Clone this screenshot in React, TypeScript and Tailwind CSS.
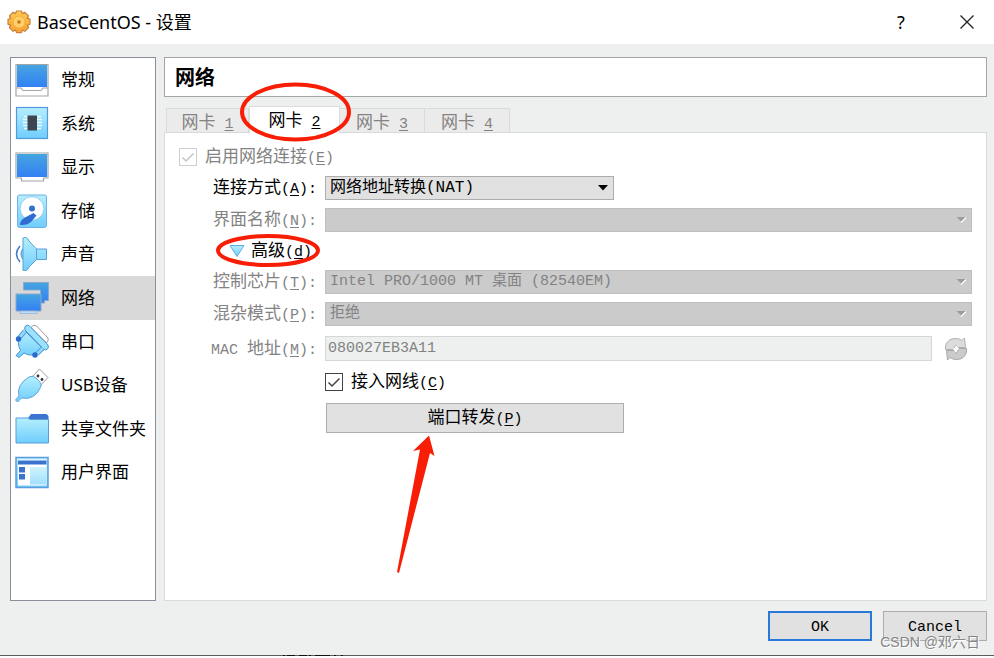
import type { ReactNode } from "react";

const mono = "font-['Liberation_Mono','Noto_Sans_CJK_SC',monospace]";
const cjk = "font-['Noto_Sans_CJK_SC',sans-serif]";

function Key({ children }: { children: ReactNode }) {
  return <span className={`${mono} text-[15px]`}>{children}</span>;
}

function Mnemonic({ text, letter }: { text: string; letter: string }) {
  return (
    <>
      {text}
      <Key>
        (<u className="underline-offset-2">{letter}</u>)
      </Key>
    </>
  );
}

function Gradients() {
  return (
    <svg className="absolute size-0" aria-hidden="true">
      <defs>
        <linearGradient id="screen" x1="0" y1="0" x2="0" y2="1">
          <stop offset="0" stopColor="#45a5e0" />
          <stop offset="1" stopColor="#3380f4" />
        </linearGradient>
        <linearGradient id="sky" x1="0" y1="0" x2="0" y2="1">
          <stop offset="0" stopColor="#b5effd" />
          <stop offset="1" stopColor="#6fcdfc" />
        </linearGradient>
        <linearGradient id="gear" x1="0" y1="0" x2="0" y2="1">
          <stop offset="0" stopColor="#ffcb50" />
          <stop offset="1" stopColor="#f7a233" />
        </linearGradient>
      </defs>
    </svg>
  );
}

const icons: Record<string, ReactNode> = {
  general: (
    <>
      <path d="M1 1.500h32v31.500h-32z" fill="#fff" stroke="#a3a6a9" strokeWidth="1.200" />
      <path d="M2 2h30v22h-30z" fill="url(#screen)" />
      <path d="M1 25h5l2 2.500h18l2-2.500h5" fill="none" stroke="#a3a6a9" strokeWidth="1.200" />
    </>
  ),
  system: (
    <>
      <rect x="1.500" y="1.500" width="31" height="31" fill="url(#sky)" stroke="#5599dc" strokeWidth="1.200" />
      <path d="M9 10.500h17M8 13.500h19M8 16.500h19M8 19.500h19M9 22.500h17" stroke="#eefaff" strokeWidth="1.400" />
      <rect x="12.500" y="9.500" width="9.500" height="15" fill="#3d4650" />
    </>
  ),
  display: (
    <>
      <path d="M1 3h32v25h-4.500v3h-22v-3H1z" fill="#fff" stroke="#a0a4a8" strokeWidth="1.200" />
      <path d="M2 4h30v23H2z" fill="url(#screen)" />
    </>
  ),
  storage: (
    <>
      <rect x="2.500" y="1" width="29" height="32.500" rx="2" fill="url(#sky)" stroke="#6fb0e6" />
      <circle cx="17" cy="14.500" r="11.800" fill="#fff" stroke="#8fc3ee" strokeWidth=".8" />
      <path d="M5 31q0-5 5-7.500l8.500-4.500 3 2.500-5 6q-4 4-11.500 3.500z" fill="#2f6cd2" />
      <circle cx="17" cy="14.500" r="3" fill="#3270cf" />
    </>
  ),
  audio: (
    <>
      <path d="M5 9q-7 8 0 16" fill="none" stroke="#3c79c8" strokeWidth="1.500" />
      <path d="M8 11.500q-4 5.500 0 11" fill="#8edaff" stroke="#4a8bd8" />
      <path d="M8 1q4-2 6 3l7.500 8h10v10.500h-10L14 30q-2 5-6 3.500z" fill="url(#sky)" stroke="#5d9fd6" />
      <path d="M21.500 12v10.500" stroke="#5d9fd6" />
    </>
  ),
  network: (
    <>
      <path d="M8.500 1.500h25v18h-4v2.500h-4v-13h-17z" fill="url(#screen)" stroke="#8ba9c9" />
      <path d="M1 13h25v17H1z" fill="url(#screen)" stroke="#8ba9c9" />
      <path d="M5 30h17v2.500H5z" fill="#b9dcfa" stroke="#8ba9c9" strokeWidth=".6" />
    </>
  ),
  serial: (
    <>
      <path d="M16 3.500q2-3 5-2L33 14q1 2-1.500 5z" fill="#fff" stroke="#9b9b9b" />
      <path d="M10 7L29 26l-4 1q-8 7-16 2l-5 4.500-3-2 4.500-5Q1 18 6 12z" fill="url(#sky)" stroke="#4b94d5" />
      <path d="M10.500 2q2-2 4 0l18.500 19q1 2-.5 4t-4 0L10 6q-1-2 .5-4z" fill="#9be2ff" stroke="#4b94d5" />
      <path d="M10 7l-6 7M28 24l-6 6" stroke="#4b94d5" strokeWidth="4.500" />
      <path d="M10 7l-6 7M28 24l-6 6" stroke="#8fd8fd" strokeWidth="2.800" />
      <circle cx="3.500" cy="15" r="2.700" fill="#2869c9" />
      <circle cx="20" cy="31" r="2.700" fill="#2869c9" />
    </>
  ),
  usb: (
    <>
      <path d="M17 9l7.500-8L33 9.500 25 18z" fill="#fff" stroke="#9c9c9c" strokeLinejoin="round" />
      <path d="M14 9q4-2 7 1l3.500 3.500q3 3 1 6-6 13-19 10.500l-4 4-2-2 3.500-4Q1 17 14 9z" fill="url(#sky)" stroke="#5ca4df" />
      <circle cx="23" cy="8" r="1.400" fill="#333" />
      <circle cx="27" cy="11.500" r="1.400" fill="#333" />
    </>
  ),
  folder: (
    <>
      <path d="M13 6l3-4h15.500l2 2v5H13z" fill="#3d75d1" />
      <path d="M1 6h12l2 1.500h18.500V31H1z" fill="url(#sky)" stroke="#5b9ddb" />
    </>
  ),
  ui: (
    <>
      <path d="M1 2.500h32v30H1z" fill="url(#sky)" stroke="#5b9ddb" strokeWidth="1.500" />
      <path d="M3 4.500h28.500v26H3z" fill="#fff" />
      <path d="M3 5.500h28.500v4H3zM4 12h6v5.500H4zM4 19h6v5.500H4z" fill="#3b74cf" />
      <path d="M15 12h16v17.500H15z" fill="url(#sky)" opacity=".65" />
    </>
  ),
};

const sections = [
  ["general", "常规"],
  ["system", "系统"],
  ["display", "显示"],
  ["storage", "存储"],
  ["audio", "声音"],
  ["network", "网络"],
  ["serial", "串口"],
  ["usb", "USB设备"],
  ["folder", "共享文件夹"],
  ["ui", "用户界面"],
];

function Sidebar() {
  return (
    <nav className="w-[146px] shrink-0 border border-[#8b8f9b] bg-white">
      <ul className="grid h-[436px] grid-rows-10">
        {sections.map(([id, label]) => (
          <li key={id} className={id === "network" ? "bg-[#d9d9d9]" : ""}>
            <button
              type="button"
              className="flex h-full w-full items-center gap-3 pl-1 text-left font-['Noto_Sans','Noto_Sans_CJK_SC',sans-serif] text-[17px] whitespace-nowrap"
            >
              <svg className="size-[34px] shrink-0" viewBox="0 0 34 34" aria-hidden="true">
                {icons[id]}
              </svg>
              {label}
            </button>
          </li>
        ))}
      </ul>
    </nav>
  );
}

function Tabs() {
  return (
    <div role="tablist" className="flex h-[35px] items-end pl-0.5 text-[17px]">
      {["1", "2", "3", "4"].map((n) => {
        const active = n === "2";
        return (
          <button
            key={n}
            type="button"
            role="tab"
            aria-selected={active}
            className={
              active
                ? "z-10 -mb-px h-[27px] w-[91px] border border-b-0 border-[#dcdcdc] bg-white pb-0.5 leading-6"
                : "h-6 w-[85px] border border-b-0 border-l-0 border-[#d9dbda] bg-[#ebebeb] leading-6 text-[#838383] first:w-[83px] first:border-l"
            }
          >
            网卡
            <Key>
              {" "}
              <u className="underline-offset-2">{n}</u>
            </Key>
          </button>
        );
      })}
    </div>
  );
}

function Check({ id, disabled, children }: { id: string; disabled?: boolean; children: ReactNode }) {
  return (
    <div className="flex h-[22px] items-center gap-2">
      <span className="relative flex size-[18px]">
        <input
          id={id}
          type="checkbox"
          defaultChecked
          disabled={disabled}
          className="size-[18px] appearance-none border border-[#444] bg-white disabled:border-[#cfcfcf]"
        />
        <svg
          className={`pointer-events-none absolute inset-0 ${disabled ? "text-[#c4c4c4]" : "text-[#444]"}`}
          viewBox="0 0 18 18"
          aria-hidden="true"
        >
          <path d="M3.500 9.500l3.500 3.500 7.500-7.500" fill="none" stroke="currentColor" strokeWidth="1.500" />
        </svg>
      </span>
      <label htmlFor={id} className={disabled ? "text-[#838383]" : ""}>
        {children}
      </label>
    </div>
  );
}

function Combo({ id, value, className, disabled }: { id: string; value: string; className: string; disabled?: boolean }) {
  return (
    <div className={`relative h-6 ${className}`}>
      <select
        id={id}
        disabled={disabled}
        className={`${mono} block h-full w-full appearance-none border border-[#adadad] bg-[#e1e1e1] pl-1 leading-5 disabled:border-[#bfbfbf] disabled:bg-[#cbcbcb] disabled:text-[#838383] disabled:opacity-100 ${disabled ? "text-[15px]" : "text-base"}`}
      >
        <option>{value}</option>
      </select>
      <svg className="pointer-events-none absolute top-2 right-1.5 h-2 w-2.5" viewBox="0 0 10 8" aria-hidden="true">
        {disabled && <path d="M5 6.500l5-5" stroke="#fff" strokeWidth="1.500" />}
        <path d={disabled ? "M.5 1h9L5 5.500z" : "M0 1h10L5 6.500z"} fill={disabled ? "#9c9c9c" : "#000"} />
      </svg>
    </div>
  );
}

function Field({
  id,
  text,
  letter,
  muted = true,
  tall = false,
  children,
}: {
  id: string;
  text: ReactNode;
  letter: string;
  muted?: boolean;
  tall?: boolean;
  children: ReactNode;
}) {
  return (
    <div className={`flex items-center gap-2 ${tall ? "h-[29px]" : "h-6"}`}>
      <label htmlFor={id} className={`w-[138px] shrink-0 text-right ${muted ? "text-[#838383]" : ""}`}>
        {text}
        <Key>
          (<u className="underline-offset-2">{letter}</u>):
        </Key>
      </label>
      {children}
    </div>
  );
}

function RefreshIcon() {
  return (
    <svg className="size-6" viewBox="0 0 24 24" aria-hidden="true">
      <path
        d="M1.500 12.500V9Q3.500 1.500 11.500 1.500q4 0 6.500 2L20.500 1l1 9.500h-7.500L12 8l-3 4.500z"
        fill="#dcdcdc"
        stroke="#b0b0b0"
        strokeLinejoin="round"
      />
      <path
        d="M22.500 11.500V15q-2 7.500-10 7.500-4 0-6.500-2L3.500 23l-1-9.500H10l2 3 3-5z"
        fill="#cbcbcb"
        stroke="#a8a8a8"
        strokeLinejoin="round"
      />
      <path d="M13.500 8l-5 4.500h2.500L10.500 16l5-4.500H13z" fill="#fff" />
    </svg>
  );
}

function AdapterPanel() {
  return (
    <section
      role="tabpanel"
      className="flex flex-1 flex-col gap-2 border border-[#d9dbda] bg-white px-3.5 pt-[13px] text-[17px] leading-[22px] whitespace-nowrap"
    >
      <Check id="enable" disabled>
        <Mnemonic text="启用网络连接" letter="E" />
      </Check>
      <Field id="attached" text="连接方式" letter="A" muted={false}>
        <Combo id="attached" value="网络地址转换(NAT)" className="w-[289px]" />
      </Field>
      <Field id="name" text="界面名称" letter="N">
        <Combo id="name" value="" className="flex-1" disabled />
      </Field>
      <button type="button" className="flex h-[22px] items-center gap-1.5 self-start pl-[50px]">
        <svg className="h-3.5 w-4" viewBox="0 0 16 14" aria-hidden="true">
          <path d="M1 1.500h14L8 12.500z" fill="url(#sky)" stroke="#64aee8" strokeLinejoin="round" />
        </svg>
        <span>
          <Mnemonic text="高级" letter="d" />
        </span>
      </button>
      <Field id="chip" text="控制芯片" letter="T">
        <Combo id="chip" value="Intel PRO/1000 MT 桌面 (82540EM)" className="flex-1" disabled />
      </Field>
      <Field id="promiscuous" text="混杂模式" letter="P">
        <Combo id="promiscuous" value="拒绝" className="flex-1" disabled />
      </Field>
      <Field
        id="mac"
        text={
          <>
            <Key>MAC </Key>地址
          </>
        }
        letter="M"
        tall
      >
        <input
          id="mac"
          disabled
          defaultValue="080027EB3A11"
          className={`${mono} h-[25px] min-w-0 flex-1 border border-[#d5d7d6] bg-[#edf0ef] pl-0.5 text-[15px] text-[#838383]`}
        />
        <button type="button" disabled aria-label="刷新" className="mr-1 ml-1">
          <RefreshIcon />
        </button>
      </Field>
      <div className="pl-[146px]">
        <Check id="cable">
          <Mnemonic text="接入网线" letter="C" />
        </Check>
      </div>
      <div className="flex h-[34px] items-center pl-[147px]">
        <button type="button" className="h-[30px] w-[298px] border border-[#adadad] bg-[#e1e1e1]">
          <Mnemonic text="端口转发" letter="P" />
        </button>
      </div>
    </section>
  );
}

function TitleBar() {
  return (
    <header className="flex h-11 shrink-0 items-center bg-white pl-[7px]">
      <svg className="size-6" viewBox="0 0 24 24" aria-hidden="true">
        <g fill="url(#gear)" stroke="#c8803c" strokeWidth="1.200">
          <circle cx="12" cy="12" r="9" />
          <path
            strokeLinejoin="round"
            d="M9.500 1h5l.8 2.600 2.400-1.300 3.800 3.600-1.300 2.500 2.800.8v5l-2.700.9 1.300 2.500-3.700 3.700-2.500-1.300-.9 2.600h-5l-.9-2.600-2.500 1.300-3.700-3.700 1.300-2.500L1 14.300v-5l2.700-.9-1.300-2.500 3.800-3.600 2.400 1.300z"
          />
        </g>
        <circle cx="12" cy="12" r="6" fill="#ffd068" stroke="#f6ab3f" />
        <circle cx="12" cy="12" r="1.800" fill="#c77328" />
      </svg>
      <h1 className="ml-1.5 flex-1 font-['Noto_Sans','Noto_Sans_CJK_SC',sans-serif] text-lg">BaseCentOS - 设置</h1>
      <button type="button" className="w-[78px] font-['Noto_Sans',sans-serif] text-lg" aria-label="帮助">
        ?
      </button>
      <button type="button" aria-label="关闭" className="flex w-[54px] justify-center">
        <svg className="size-4" viewBox="0 0 16 16" aria-hidden="true">
          <path d="M1.500 1.500l13 13M14.500 1.500l-13 13" stroke="#222" strokeWidth="1.300" />
        </svg>
      </button>
    </header>
  );
}

function Annotations() {
  return (
    <svg
      className="pointer-events-none absolute top-0 left-0 z-20"
      width="640"
      height="600"
      viewBox="0 0 640 600"
      aria-hidden="true"
    >
      <g fill="none" stroke="#f71e05" strokeWidth="4">
        <ellipse cx="295.500" cy="112" rx="53.500" ry="27.500" />
        <ellipse cx="268" cy="250.500" rx="50" ry="14.500" />
      </g>
      <path d="M429 435.500l5.500 20.500-4.500-3L399 573l-2-1 23-122.500-7 1.500z" fill="#f71e05" />
    </svg>
  );
}

export default function App() {
  return (
    <div className={`relative flex h-screen flex-col bg-white pb-0.5 text-black ${cjk}`}>
      <Gradients />
      <TitleBar />
      <div className="flex flex-1 flex-col border-b border-[#5c5c5c] bg-[#edf0ef] pt-[13px] pr-[7px] pl-2.5">
        <div className="flex flex-1 gap-2">
          <Sidebar />
          <main className="flex min-w-0 flex-1 flex-col">
            <h2 className="flex h-10 items-center border border-[#a3a6a5] bg-white pl-2.5 text-xl font-bold">网络</h2>
            <Tabs />
            <AdapterPanel />
          </main>
        </div>
        <footer className={`flex justify-end gap-[11px] pt-2.5 pb-3.5 text-[15px] ${mono}`}>
          <button type="button" className="h-[30px] w-[104px] border-2 border-[#2a78da] bg-[#e1e1e1] pt-1">
            OK
          </button>
          <button type="button" className="h-[30px] w-[104px] border border-[#adadad] bg-[#e1e1e1] pt-1">
            Cancel
          </button>
        </footer>
      </div>
      <svg className="absolute bottom-0.5 left-[283px] h-px w-[60px]" viewBox="0 0 60 1" aria-hidden="true">
        <path d="M0 .5h2M4 .5h8M16 .5h8M26 .5h2M32 .5h15M51 .5h2M58 .5h2" stroke="#111" />
      </svg>
      <p className="absolute right-3.5 bottom-1.5 font-['Liberation_Sans','Noto_Sans_CJK_SC',sans-serif] text-sm leading-5 text-[#858585] text-shadow-[1px_1px_0_#ffffff]">
        CSDN @邓六日
      </p>
      <Annotations />
    </div>
  );
}
